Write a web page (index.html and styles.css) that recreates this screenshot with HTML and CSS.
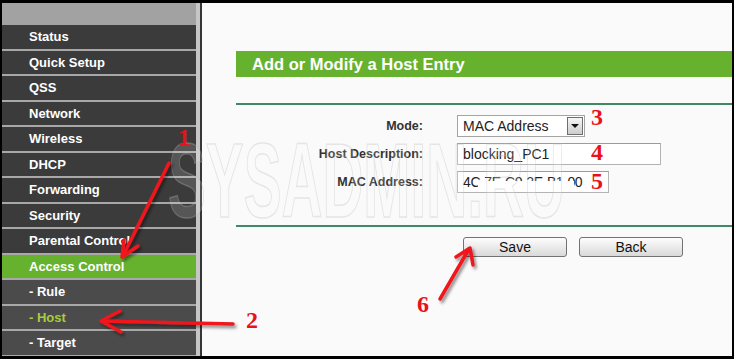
FILE: index.html
```html
<!DOCTYPE html>
<html lang="en">
<head>
    <meta charset="UTF-8">
    <title>Access Control - Host</title>
    <link rel="stylesheet" href="styles.css">
</head>
<body>

    <!-- Router frame -->
    <div class="frame">

        <!-- Left menu -->
        <aside class="sidebar">
            <div class="side-top"></div>
            <ul class="menu">
                <li>Status</li>
                <li>Quick Setup</li>
                <li>QSS</li>
                <li>Network</li>
                <li>Wireless</li>
                <li>DHCP</li>
                <li>Forwarding</li>
                <li>Security</li>
                <li>Parental Control</li>
                <li class="active">Access Control</li>
                <li class="sub">- Rule</li>
                <li class="sub current">- Host</li>
                <li class="sub">- Target</li>
            </ul>
        </aside>

        <!-- Host entry form -->
        <main class="content">
            <h1 class="title">Add or Modify a Host Entry</h1>
            <div class="rule"></div>

            <div class="form">
                <label>Mode:</label>
                <div class="select">
                    <span>MAC Address</span>
                    <span class="drop"></span>
                </div>

                <label>Host Description:</label>
                <div class="input wide">blocking_PC1</div>

                <label>MAC Address:</label>
                <div class="input mac">4C-7E-C0-2E-B1-00<span class="mask"></span></div>
            </div>

            <div class="rule rule-bottom"></div>

            <div class="buttons">
                <button type="button">Save</button>
                <button type="button">Back</button>
            </div>
        </main>
    </div>

    <!-- Screenshot annotations -->
    <div class="watermark">SYSADMIN.RU</div>

    <svg class="arrows" width="734" height="359" viewBox="0 0 734 359">
        <defs>
            <filter id="shadow" x="-20%" y="-20%" width="140%" height="140%">
                <feDropShadow dx="2" dy="2.5" stdDeviation="1.5" flood-color="#000" flood-opacity="0.45"/>
            </filter>
        </defs>
        <g fill="none" stroke="#f0141e" stroke-width="3.5" stroke-linecap="round" stroke-linejoin="round" filter="url(#shadow)">
            <path d="M169 163 L123 256"/>
            <path d="M124 240 L122 257 L138 246"/>
            <path d="M233 324 L102 321"/>
            <path d="M120 311 L101 321 L121 332"/>
            <path d="M440 299 L469 249"/>
            <path d="M456 257 L470 248 L473 265"/>
        </g>
    </svg>

    <span class="num n1">1</span>
    <span class="num n2">2</span>
    <span class="num n3">3</span>
    <span class="num n4">4</span>
    <span class="num n5">5</span>
    <span class="num n6">6</span>

</body>
</html>
```

FILE: styles.css
```css
/* General */
* { margin: 0; padding: 0; box-sizing: border-box; }
body { width: 734px; height: 359px; overflow: hidden; background: #000; position: relative;
    font-family: "Liberation Sans", Arial, sans-serif; }

/* Frame */
.frame { display: flex; height: 353px; margin: 3px 2px 0 2px; background: #fafafa; overflow: hidden; }

/* Sidebar */
.sidebar { width: 200px; flex-shrink: 0; padding-right: 4px; background: #c6c6c6;
    border-right: 2px solid #363636; overflow: hidden; }
.side-top { height: 22px; background: #a2a2a2; }
.menu { list-style: none; }
.menu li { height: 25.5px; line-height: 23.5px; padding-left: 27px; background: #3b3b3b;
    border-bottom: 2px solid #a8a8a8; color: #fff; font-size: 13px; font-weight: bold; }
.menu li.active { background: #66b22f; }
.menu li.sub { background: #4b4b4b; }
.menu li.current { color: #a8cc3c; }

/* Content */
.content { flex: 1; padding: 48px 0 0 34px; }
.title { height: 26px; line-height: 26px; padding-left: 16px; background: #66b22f; color: #fff;
    font-size: 16.5px; font-weight: bold; }
.rule { height: 2px; margin-top: 26px; background: #3f8a64; }
.rule-bottom { margin-top: 29px; }

/* Form */
.form { display: grid; grid-template-columns: 187px auto; grid-auto-rows: 28px; column-gap: 34px;
    align-items: center; margin-top: 7px; }
.form label { text-align: right; font-size: 12.5px; font-weight: bold; color: #333; }
.select { display: flex; align-items: center; justify-content: space-between; width: 128px; height: 22px;
    padding-left: 5px; border: 1px solid #a4a4a4; background: #fff; font-size: 14px; color: #222; }
.drop { position: relative; width: 16px; height: 18px; margin-right: 1px; border: 1px solid #6e6e6e;
    background: linear-gradient(#f6f6f6, #cdcdcd); }
.drop::after { content: ""; position: absolute; left: 3px; top: 6px; border-left: 4px solid transparent;
    border-right: 4px solid transparent; border-top: 4px solid #111; }
.input { position: relative; height: 22px; line-height: 20px; padding-left: 5px; border: 1px solid #b4b4b4;
    border-top-color: #9c9c9c; background: #fff; font-size: 14px; color: #222; }
.input.wide { width: 204px; }
.input.mac { width: 152px; overflow: hidden; white-space: nowrap; letter-spacing: -0.4px; }
.mask { position: absolute; left: 20px; top: 9px; width: 96px; height: 10px; background: #fff; }

/* Buttons */
.buttons { display: flex; gap: 12px; margin-top: 10px; padding-left: 227px; }
.buttons button { width: 104px; height: 20px; border: 1px solid #727272; border-radius: 3px;
    background: linear-gradient(#fdfdfd, #d9d9d9); font-family: "Liberation Sans", Arial, sans-serif;
    font-size: 14px; color: #111; }

/* Annotations */
.watermark { position: absolute; left: 168px; top: 128px; font-size: 105px; font-weight: bold; line-height: 1;
    white-space: nowrap; color: rgba(255, 255, 255, 0.14); -webkit-text-stroke: 1.5px rgba(185, 185, 185, 0.32);
    transform: scaleX(0.54); transform-origin: left top; pointer-events: none; }
.arrows { position: absolute; left: 0; top: 0; pointer-events: none; }
.num { position: absolute; font-family: "Liberation Serif", "Times New Roman", serif; font-weight: bold;
    font-size: 24px; line-height: 24px; color: #e8121c; }
.n1 { left: 178px; top: 125px; }
.n2 { left: 246px; top: 308px; }
.n3 { left: 591px; top: 105px; }
.n4 { left: 591px; top: 140px; }
.n5 { left: 591px; top: 169px; }
.n6 { left: 417px; top: 292px; }
```
